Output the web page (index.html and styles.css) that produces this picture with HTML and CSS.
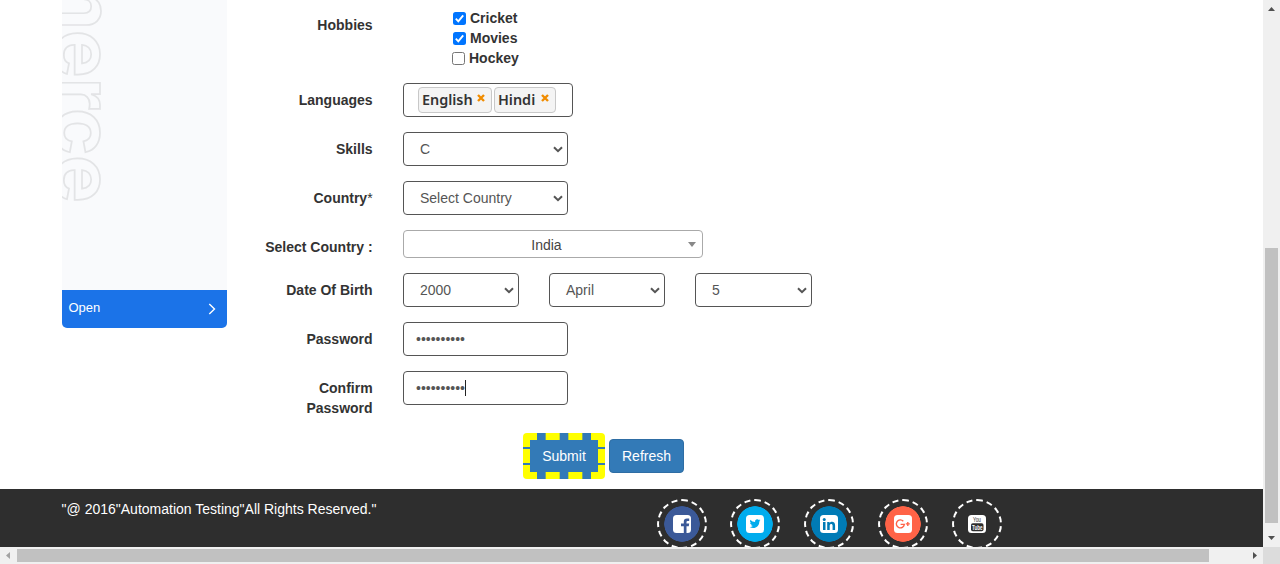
FILE: index.html
```html
<!DOCTYPE html>
<html lang="en">
<head>
<meta charset="utf-8">
<title>Register</title>
<link rel="stylesheet" href="styles.css">
</head>
<body>
<svg class="defs" width="0" height="0" aria-hidden="true">
  <symbol id="chevron" viewBox="0 0 10 7"><path d="M1 1.2 5 5.2 9 1.2" fill="none" stroke="#555" stroke-width="2"/></symbol>
</svg>
<div class="window">
  <div class="page">
    <div class="content">
      <aside class="ad">
        <div class="ad-art"><span class="ad-word">merce</span></div>
        <div class="ad-open"><span>Open</span><svg width="8" height="12" viewBox="0 0 8 12"><path d="M1.3 1 6.5 6 1.3 11" fill="none" stroke="#fff" stroke-width="1.4"/></svg></div>
      </aside>
      <form class="form">
        <div class="row">
          <div class="label">Hobbies</div>
          <div class="hobbies">
            <label class="check"><span class="box on"><svg width="13" height="13" viewBox="0 0 13 13"><path d="M2.8 6.7 5.3 9.3 10.2 3.4" fill="none" stroke="#fff" stroke-width="1.9"/></svg></span>Cricket</label>
            <label class="check"><span class="box on"><svg width="13" height="13" viewBox="0 0 13 13"><path d="M2.8 6.7 5.3 9.3 10.2 3.4" fill="none" stroke="#fff" stroke-width="1.9"/></svg></span>Movies</label>
            <label class="check last"><span class="box"></span>Hockey</label>
          </div>
        </div>
        <div class="row">
          <div class="label">Languages</div>
          <div class="tags">
            <span class="tag english">English<svg width="8" height="8" viewBox="0 0 8 8"><path d="M1 1 7 7M7 1 1 7" stroke="#f08c00" stroke-width="2.4"/></svg></span>
            <span class="tag hindi">Hindi<svg width="8" height="8" viewBox="0 0 8 8"><path d="M1 1 7 7M7 1 1 7" stroke="#f08c00" stroke-width="2.4"/></svg></span>
          </div>
        </div>
        <div class="row">
          <div class="label">Skills</div>
          <div class="field select">C<svg width="10" height="7"><use href="#chevron"/></svg></div>
        </div>
        <div class="row">
          <div class="label">Country<span class="star">*</span></div>
          <div class="field select">Select Country<svg width="10" height="7"><use href="#chevron"/></svg></div>
        </div>
        <div class="row">
          <div class="label">Select Country :</div>
          <div class="combo"><span class="combo-text">India</span><span class="combo-arrow"></span></div>
        </div>
        <div class="row">
          <div class="label">Date Of Birth</div>
          <div class="dates">
            <div class="field select">2000<svg width="10" height="7"><use href="#chevron"/></svg></div>
            <div class="field select">April<svg width="10" height="7"><use href="#chevron"/></svg></div>
            <div class="field select">5<svg width="10" height="7"><use href="#chevron"/></svg></div>
          </div>
        </div>
        <div class="row">
          <div class="label">Password</div>
          <div class="field">••••••••••</div>
        </div>
        <div class="row">
          <div class="label narrow">Confirm Password</div>
          <div class="field">••••••••••<span class="caret"></span></div>
        </div>
        <div class="actions">
          <button type="button" class="btn submit">Submit</button>
          <button type="button" class="btn">Refresh</button>
        </div>
      </form>
    </div>
    <footer class="footer">
      <div class="copy">"@ 2016"Automation Testing"All Rights Reserved."</div>
      <div class="social">
        <span class="ring facebook"><svg width="18" height="18" viewBox="0 0 18 18"><rect width="18" height="18" rx="3.5" fill="#fff"/><path d="M10.800 18V11.200H8V8.400h2.800V6.500q0-3.100 3.200-3.100h2.200v2.500h-1.500q-1.200 0-1.200 1.200v1.300h2.700l-.4 2.800h-2.300V18Z" fill="#3b5998"/></svg></span>
        <span class="ring twitter"><svg width="18" height="18" viewBox="0 0 18 18"><rect width="18" height="18" rx="3.5" fill="#fff"/><path d="M14.500 5.400q-.6.3-1.200.4.7-.5.9-1.200-.6.4-1.300.5a2.200 2.200 0 0 0-3.800 2Q6.300 7 4.300 4.700q-1 1.800.7 3-.5 0-1-.3 0 1.800 1.800 2.200-.5.1-1 0 .5 1.400 2 1.500-1.500 1.100-3.200.9c4.600 2.800 9.800-.1 9.700-5.500q.7-.4 1.200-1.100Z" fill="#00aced"/></svg></span>
        <span class="ring linkedin"><svg width="18" height="18" viewBox="0 0 18 18"><rect width="18" height="18" rx="3.5" fill="#fff"/><path d="M3 7h2.500v8H3ZM7.200 7h2.400v1.200c1.300-2.200 5.500-1.900 5.500 2.100V15h-2.500v-4.300c0-2.400-2.900-2.100-2.900 0V15H7.200Z" fill="#007bb6"/><circle cx="4.250" cy="4.400" r="1.500" fill="#007bb6"/></svg></span>
        <span class="ring google"><svg width="18" height="18" viewBox="0 0 18 18"><rect width="18" height="18" rx="3.500" fill="#fff"/><path d="M9.300 6.200a4 4 0 1 0 1 3.200H6.600M13.800 6.900v4M11.800 8.900h4" fill="none" stroke="#ff6347" stroke-width="1.400"/></svg></span>
        <span class="ring youtube"><svg width="18" height="18" viewBox="0 0 18 18"><rect width="18" height="18" rx="3.500" fill="#fff"/><text x="9" y="7.300" textLength="8" lengthAdjust="spacingAndGlyphs" class="yt-you">You</text><rect x="3" y="8.200" width="12.500" height="8" rx="1.800" fill="#2e2e2e"/><text x="9.200" y="14.900" textLength="10.500" lengthAdjust="spacingAndGlyphs" class="yt-tube">Tube</text></svg></span>
      </div>
    </footer>
  </div>
  <div class="vbar">
    <svg width="7" height="4" viewBox="0 0 7 4"><path d="M0 4 3.500 0 7 4Z" fill="#505050"/></svg>
    <span class="vthumb"></span>
    <svg width="7" height="4" viewBox="0 0 7 4"><path d="M0 0 3.500 4 7 0Z" fill="#505050"/></svg>
  </div>
  <div class="hbar">
    <svg width="4" height="7" viewBox="0 0 4 7"><path d="M4 0 0 3.500 4 7Z" fill="#a3a3a3"/></svg>
    <span class="hthumb"></span>
    <svg width="4" height="7" viewBox="0 0 4 7"><path d="M0 0 4 3.500 0 7Z" fill="#505050"/></svg>
  </div>
  <div class="corner"></div>
</div>
</body>
</html>
```

FILE: styles.css
```css
* { box-sizing: border-box; }
body { margin: 0; overflow: hidden; font: 14px/20px "Liberation Sans", Arial, sans-serif; color: #333; background: #fff; }
svg { display: block; flex: none; }
.defs { position: absolute; }
.window { display: grid; grid-template: 547px 17px / 1263px 17px; width: 1280px; height: 564px; }
.page { overflow: hidden; display: flex; flex-direction: column; }
.content { height: 489px; flex: none; display: flex; align-items: flex-start; padding-left: 62px; }

.ad { width: 165px; height: 328px; border-radius: 0 0 5px 5px; overflow: hidden; background: #f9fafc; }
.ad-art { height: 290px; overflow: hidden; display: flex; flex-direction: column; justify-content: flex-end; align-items: flex-start; padding-bottom: 87px; }
.ad-word { writing-mode: vertical-rl; margin-left: -17px; font: 700 80px/80px Inter, sans-serif; color: transparent; -webkit-text-stroke: 1.7px #e3e4e6; }
.ad-open { height: 38px; background: #1b73e8; color: #fff; display: flex; align-items: center; justify-content: space-between; padding: 0 11px 2px 6.5px; font-size: 13px; }
.ad-open svg { margin-top: 2px; }

.form { padding: 8px 0 0 15px; width: 600px; }
.row { display: flex; align-items: flex-start; margin-bottom: 15px; }
.label { width: 130.6px; padding: 7px 0 0 10px; text-align: right; font-weight: 700; margin-right: 30.4px; }
.label.narrow { padding-left: 60px; }
.star { font-weight: 400; }
.hobbies { padding-left: 49px; font-weight: 700; }
.check { display: flex; align-items: center; height: 20px; gap: 4px; padding-left: 1px; }
.check.last { padding-left: 0; }
.box { width: 13px; height: 13px; border: 1px solid #767676; border-radius: 2.5px; background: #fff; }
.box.on { border: 0; background: #0075ff; }
.tags { width: 170px; height: 34px; border: 1px solid #555; border-radius: 4px; display: flex; gap: 2px; padding: 3px 0 0 14px; }
.tag { height: 26px; border: 1px solid #c8c8c8; border-radius: 4px; background: #f4f4f4; display: flex; justify-content: space-between; padding: 2px 6px 0 3px; font: 600 14.4px/20px "Noto Sans", sans-serif; }
.tag svg { margin-top: 4px; }
.english { width: 74px; }
.hindi { width: 62px; }
.field { width: 165px; height: 34px; border: 1px solid #555; border-radius: 4px; color: #555; padding: 6px 12px; display: flex; }
.select { justify-content: space-between; padding: 6px 4px 6px 16px; }
.select svg { margin-top: 7px; }
.dates { display: flex; gap: 30px; }
.dates .field { width: 116px; }
.dates .field:last-child { width: 117px; }
.caret { width: 1px; height: 16px; margin-top: 2px; background: #222; }
.combo { width: 300px; height: 28px; border: 1px solid #aaa; border-radius: 4px; display: flex; align-items: center; padding: 0 6px 0 8px; color: #444; }
.combo-text { flex: 1; text-align: center; padding: 2px 7px 0 0; }
.combo-arrow { border: 4px solid transparent; border-top: 5px solid #888; border-bottom: 0; }
.actions { display: flex; align-items: center; gap: 4px; padding-left: 281px; }
.btn { font: inherit; color: #fff; background: #337ab7; border: 1px solid #2e6da4; border-radius: 4px; padding: 6px 12px; height: 34px; width: 75px; white-space: nowrap; }
.submit { border: 7px dashed #ff0; width: 82px; height: 46px; }

.footer { background: #2e2e2e; height: 80px; flex: none; display: flex; align-items: flex-start; padding: 10px 0 0 61.6px; color: #fff; }
.copy { width: 595px; }
.social { display: flex; gap: 23.75px; }
.ring { width: 50px; height: 50px; border: 2px dashed #fff; border-radius: 50%; padding: 5px; background-origin: content-box; background-repeat: no-repeat; display: flex; align-items: center; justify-content: center; }
.facebook { background-image: radial-gradient(circle closest-side, #3b5998 97%, transparent); }
.twitter { background-image: radial-gradient(circle closest-side, #00aced 97%, transparent); }
.linkedin { background-image: radial-gradient(circle closest-side, #007bb6 97%, transparent); }
.google { background-image: radial-gradient(circle closest-side, #ff6347 97%, transparent); }
.yt-you, .yt-tube { font: 400 7.5px "Liberation Sans", sans-serif; text-anchor: middle; fill: #2e2e2e; }
.yt-tube { font-weight: 700; font-size: 7px; fill: #fff; }

.vbar { background: #f0f0f0; display: flex; flex-direction: column; align-items: center; padding: 7px 0; }
.vthumb { width: 13px; height: 275px; background: #c1c1c1; margin: 237px 0 13px; }
.hbar { background: #f0f0f0; display: flex; align-items: center; padding-left: 6px; }
.hthumb { width: 1192px; height: 13px; background: #c1c1c1; margin: 0 44px 0 7px; flex: none; }
.corner { background: #dcdcdc; }
```
